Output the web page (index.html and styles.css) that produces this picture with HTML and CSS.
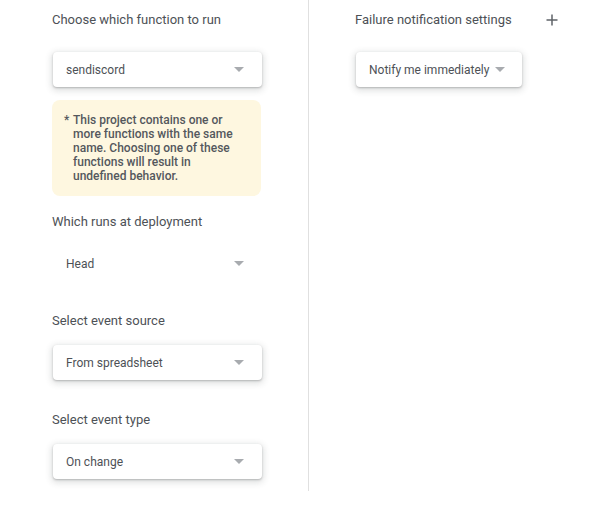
FILE: index.html
```html
<!DOCTYPE html>
<html>
<head>
<meta charset="utf-8">
<link rel="stylesheet" href="styles.css">
</head>
<body>
<div class="page">
  <div class="col left">
    <div class="label first">Choose which function to run</div>
    <div class="select raised wide">
      <span>sendiscord</span>
      <span class="arrow"></span>
    </div>
    <div class="warning">
      <span class="star">*</span>
      <span class="wtext">This project contains one or more functions with the same name. Choosing one of these functions will result in undefined behavior.</span>
    </div>
    <div class="label after-warning">Which runs at deployment</div>
    <div class="select flat wide">
      <span>Head</span>
      <span class="arrow"></span>
    </div>
    <div class="label">Select event source</div>
    <div class="select raised wide">
      <span>From spreadsheet</span>
      <span class="arrow"></span>
    </div>
    <div class="label">Select event type</div>
    <div class="select raised wide">
      <span>On change</span>
      <span class="arrow"></span>
    </div>
  </div>
  <div class="col right">
    <div class="label-row">
      <div class="label first">Failure notification settings</div>
      <svg class="plus" width="12" height="12" viewBox="0 0 12 12"><path d="M6 0.5V11.5M0.5 6H11.5" stroke="#5f6368" stroke-width="1.5" fill="none"/></svg>
    </div>
    <div class="select raised narrow">
      <span>Notify me immediately</span>
      <span class="arrow"></span>
    </div>
  </div>
</div>
</body>
</html>
```
FILE: styles.css
```css
html, body {
  margin: 0;
  padding: 0;
  background: #ffffff;
}
body {
  font-family: Roboto, "Liberation Sans", Arial, sans-serif;
  color: #4d5156;
  width: 595px;
  height: 508px;
  overflow: hidden;
}
.page {
  display: flex;
  align-items: flex-start;
}
.col.left {
  width: 256px;
  padding: 10px 0 0 52px;
  height: 481px;
  border-right: 1px solid #e0e0e0;
  display: flex;
  flex-direction: column;
  align-items: flex-start;
}
.col.right {
  padding: 10px 0 0 46px;
  width: 205px;
  display: flex;
  flex-direction: column;
  align-items: flex-start;
}
.label {
  font-size: 13px;
  line-height: 18px;
  color: #4d5156;
  margin-top: 31px;
  margin-bottom: 15px;
}
.label.first {
  margin-top: 1px;
  margin-bottom: 23px;
}
.label.after-warning {
  margin-top: 17px;
}
.label-row {
  display: flex;
  justify-content: space-between;
  width: 203px;
}
.plus {
  margin-top: 4px;
}
.select {
  box-sizing: border-box;
  height: 35px;
  display: flex;
  align-items: center;
  justify-content: space-between;
  padding: 0 18px 0 13px;
  font-size: 12px;
  color: #4d5156;
  border-radius: 4px;
  background: #fff;
}
.select.wide {
  width: 209px;
  margin-left: 1px;
}
.select.narrow {
  width: 166px;
  margin-left: 1px;
  padding-right: 17px;
}
.raised {
  box-shadow: 0 1px 2px 0 rgba(60, 64, 67, 0.3), 0 2px 6px 2px rgba(60, 64, 67, 0.15);
}
.arrow {
  width: 0;
  height: 0;
  border-left: 5px solid transparent;
  border-right: 5px solid transparent;
  border-top: 5px solid #a8abaf;
}
.warning {
  box-sizing: border-box;
  width: 209px;
  margin-top: 13px;
  background: #fef7e0;
  border-radius: 8px;
  padding: 13px 12px 13px 12px;
  display: flex;
  font-size: 12px;
  line-height: 14px;
  font-weight: 500;
  color: #54585d;
}
.star {
  width: 9px;
  flex: none;
}
.wtext {
  width: 160px;
}
```
